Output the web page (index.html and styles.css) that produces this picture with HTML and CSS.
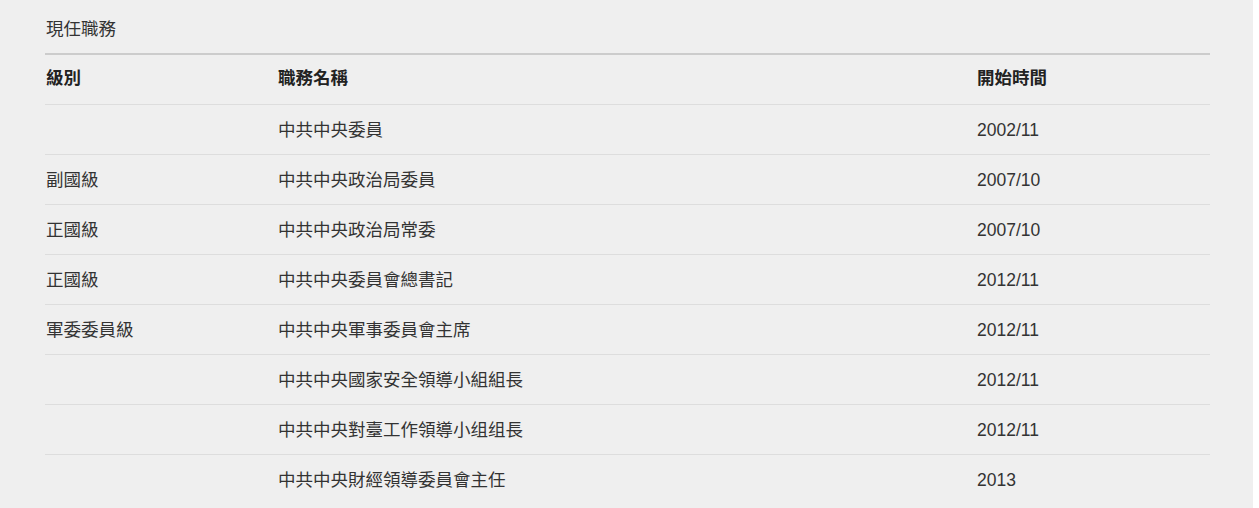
FILE: index.html
```html
<!DOCTYPE html>
<html lang="zh-Hant">
<head>
<meta charset="utf-8">
<title>現任職務</title>
<link rel="stylesheet" href="styles.css">
</head>
<body>
<div class="panel">
  <div class="title">現任職務</div>
  <table class="posts">
    <colgroup>
      <col class="c-level">
      <col class="c-name">
      <col class="c-date">
    </colgroup>
    <thead>
      <tr><th>級別</th><th>職務名稱</th><th>開始時間</th></tr>
    </thead>
    <tbody>
      <tr><td></td><td>中共中央委員</td><td>2002/11</td></tr>
      <tr><td>副國級</td><td>中共中央政治局委員</td><td>2007/10</td></tr>
      <tr><td>正國級</td><td>中共中央政治局常委</td><td>2007/10</td></tr>
      <tr><td>正國級</td><td>中共中央委員會總書記</td><td>2012/11</td></tr>
      <tr><td>軍委委員級</td><td>中共中央軍事委員會主席</td><td>2012/11</td></tr>
      <tr><td></td><td>中共中央國家安全領導小組組長</td><td>2012/11</td></tr>
      <tr><td></td><td>中共中央對臺工作領導小组组長</td><td>2012/11</td></tr>
      <tr class="last"><td></td><td>中共中央財經領導委員會主任</td><td>2013</td></tr>
    </tbody>
  </table>
</div>
</body>
</html>
```
FILE: styles.css
```css
html, body {
  margin: 0;
  padding: 0;
  background: #ffffff;
  overflow: hidden;
}
body {
  font-family: "Liberation Sans", "Noto Sans CJK TC", sans-serif;
  font-size: 17.5px;
  color: #333333;
}
.panel {
  width: 1253px;
  height: 508px;
  background: #efefef;
  box-sizing: border-box;
  padding-left: 45px;
}
.title {
  padding-top: 16px;
  line-height: 26px;
  height: 26px;
  margin-bottom: 11px;
  padding-left: 1px;
}
.posts {
  width: 1165px;
  border-collapse: collapse;
  table-layout: fixed;
  border-top: 2px solid #cccccc;
}
.c-level { width: 232px; }
.c-name { width: 699px; }
.c-date { width: 234px; }
.posts th,
.posts td {
  text-align: left;
  padding: 0 0 0 1px;
  height: 49px;
  vertical-align: middle;
  border-bottom: 1px solid #dddddd;
  line-height: 24px;
}
.posts th {
  font-weight: bold;
  color: #222222;
  padding-bottom: 3px;
  height: 46px;
}
.posts td {
  font-weight: normal;
  color: #333333;
}
.posts .last td {
  border-bottom-color: transparent;
}
```
